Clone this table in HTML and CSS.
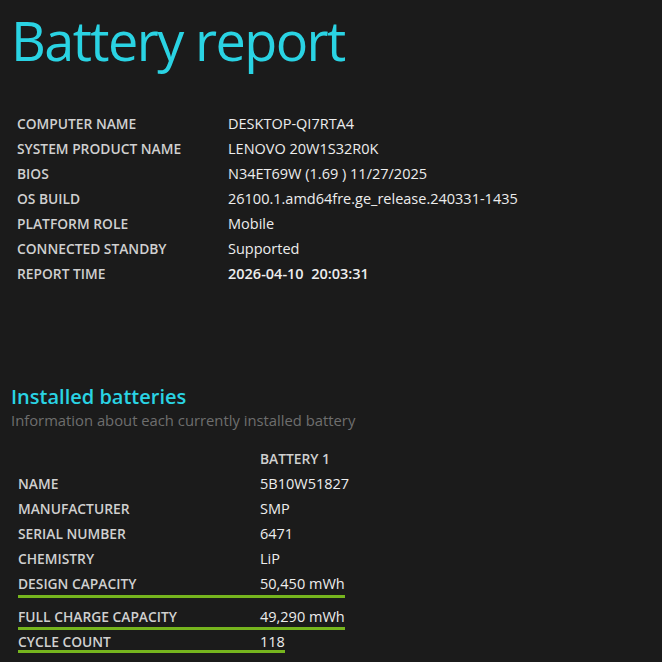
FILE: index.html
```html
<!DOCTYPE html>
<html>
<head>
<meta charset="utf-8">
<link rel="stylesheet" href="styles.css">
</head>
<body>
<h1 class="title">Battery report</h1>
<div class="info">
  <div class="row"><span class="label">COMPUTER NAME</span><span class="value">DESKTOP-QI7RTA4</span></div>
  <div class="row"><span class="label">SYSTEM PRODUCT NAME</span><span class="value">LENOVO 20W1S32R0K</span></div>
  <div class="row"><span class="label">BIOS</span><span class="value">N34ET69W (1.69 ) 11/27/2025</span></div>
  <div class="row"><span class="label">OS BUILD</span><span class="value">26100.1.amd64fre.ge_release.240331-1435</span></div>
  <div class="row"><span class="label">PLATFORM ROLE</span><span class="value">Mobile</span></div>
  <div class="row"><span class="label">CONNECTED STANDBY</span><span class="value">Supported</span></div>
  <div class="row"><span class="label">REPORT TIME</span><span class="value strong">2026-04-10&nbsp; 20:03:31</span></div>
</div>
<h2 class="section">Installed batteries</h2>
<p class="subtitle">Information about each currently installed battery</p>
<div class="batteries">
  <div class="brow head"><span class="label"></span><span class="label">BATTERY 1</span></div>
  <div class="brow"><span class="label">NAME</span><span class="value">5B10W51827</span></div>
  <div class="brow"><span class="label">MANUFACTURER</span><span class="value">SMP</span></div>
  <div class="brow"><span class="label">SERIAL NUMBER</span><span class="value">6471</span></div>
  <div class="brow"><span class="label">CHEMISTRY</span><span class="value">LiP</span></div>
  <div class="brow mark design"><span class="label">DESIGN CAPACITY</span><span class="value">50,450 mWh</span></div>
  <div class="brow mark full"><span class="label">FULL CHARGE CAPACITY</span><span class="value">49,290 mWh</span></div>
  <div class="brow mark cycle"><span class="label">CYCLE COUNT</span><span class="value">118</span></div>
</div>
</body>
</html>
```
FILE: styles.css
```css
html, body {
  margin: 0;
  padding: 0;
  background: #1b1b1b;
  height: 100%;
  overflow: hidden;
}
body {
  font-family: "Open Sans", "Noto Sans", sans-serif;
  color: #e6e6e6;
  padding-left: 11px;
}
.title {
  margin: 0;
  font-weight: 400;
  font-size: 54px;
  line-height: 80px;
  color: #2ad3e3;
  letter-spacing: -1.6px;
}
.info {
  margin-top: 31px;
  padding-left: 6px;
}
.row {
  display: grid;
  grid-template-columns: 211px auto;
  height: 25px;
  align-items: center;
}
.label {
  font-weight: 600;
  font-size: 13.8px;
  color: #d0d0d0;
}
.value {
  font-size: 14.5px;
  color: #ededed;
}
.strong {
  font-weight: 600;
}
.section {
  margin: 98px 0 0 0;
  font-size: 20px;
  font-weight: 600;
  color: #2ad3e3;
  line-height: 26px;
}
.subtitle {
  margin: 0;
  font-size: 14.8px;
  color: #6e6e6e;
  line-height: 20px;
}
.batteries {
  margin-top: 16px;
  padding-left: 7px;
}
.brow {
  display: grid;
  grid-template-columns: 242px auto;
  width: max-content;
  height: 25px;
  align-items: center;
}
.brow.mark {
  border-bottom: 3px solid #76b51e;
}
.brow.design {
  height: 24px;
}
.brow.full {
  height: 22px;
  margin-top: 7px;
}
.brow.cycle {
  height: 18px;
  margin-top: 2px;
}
```
